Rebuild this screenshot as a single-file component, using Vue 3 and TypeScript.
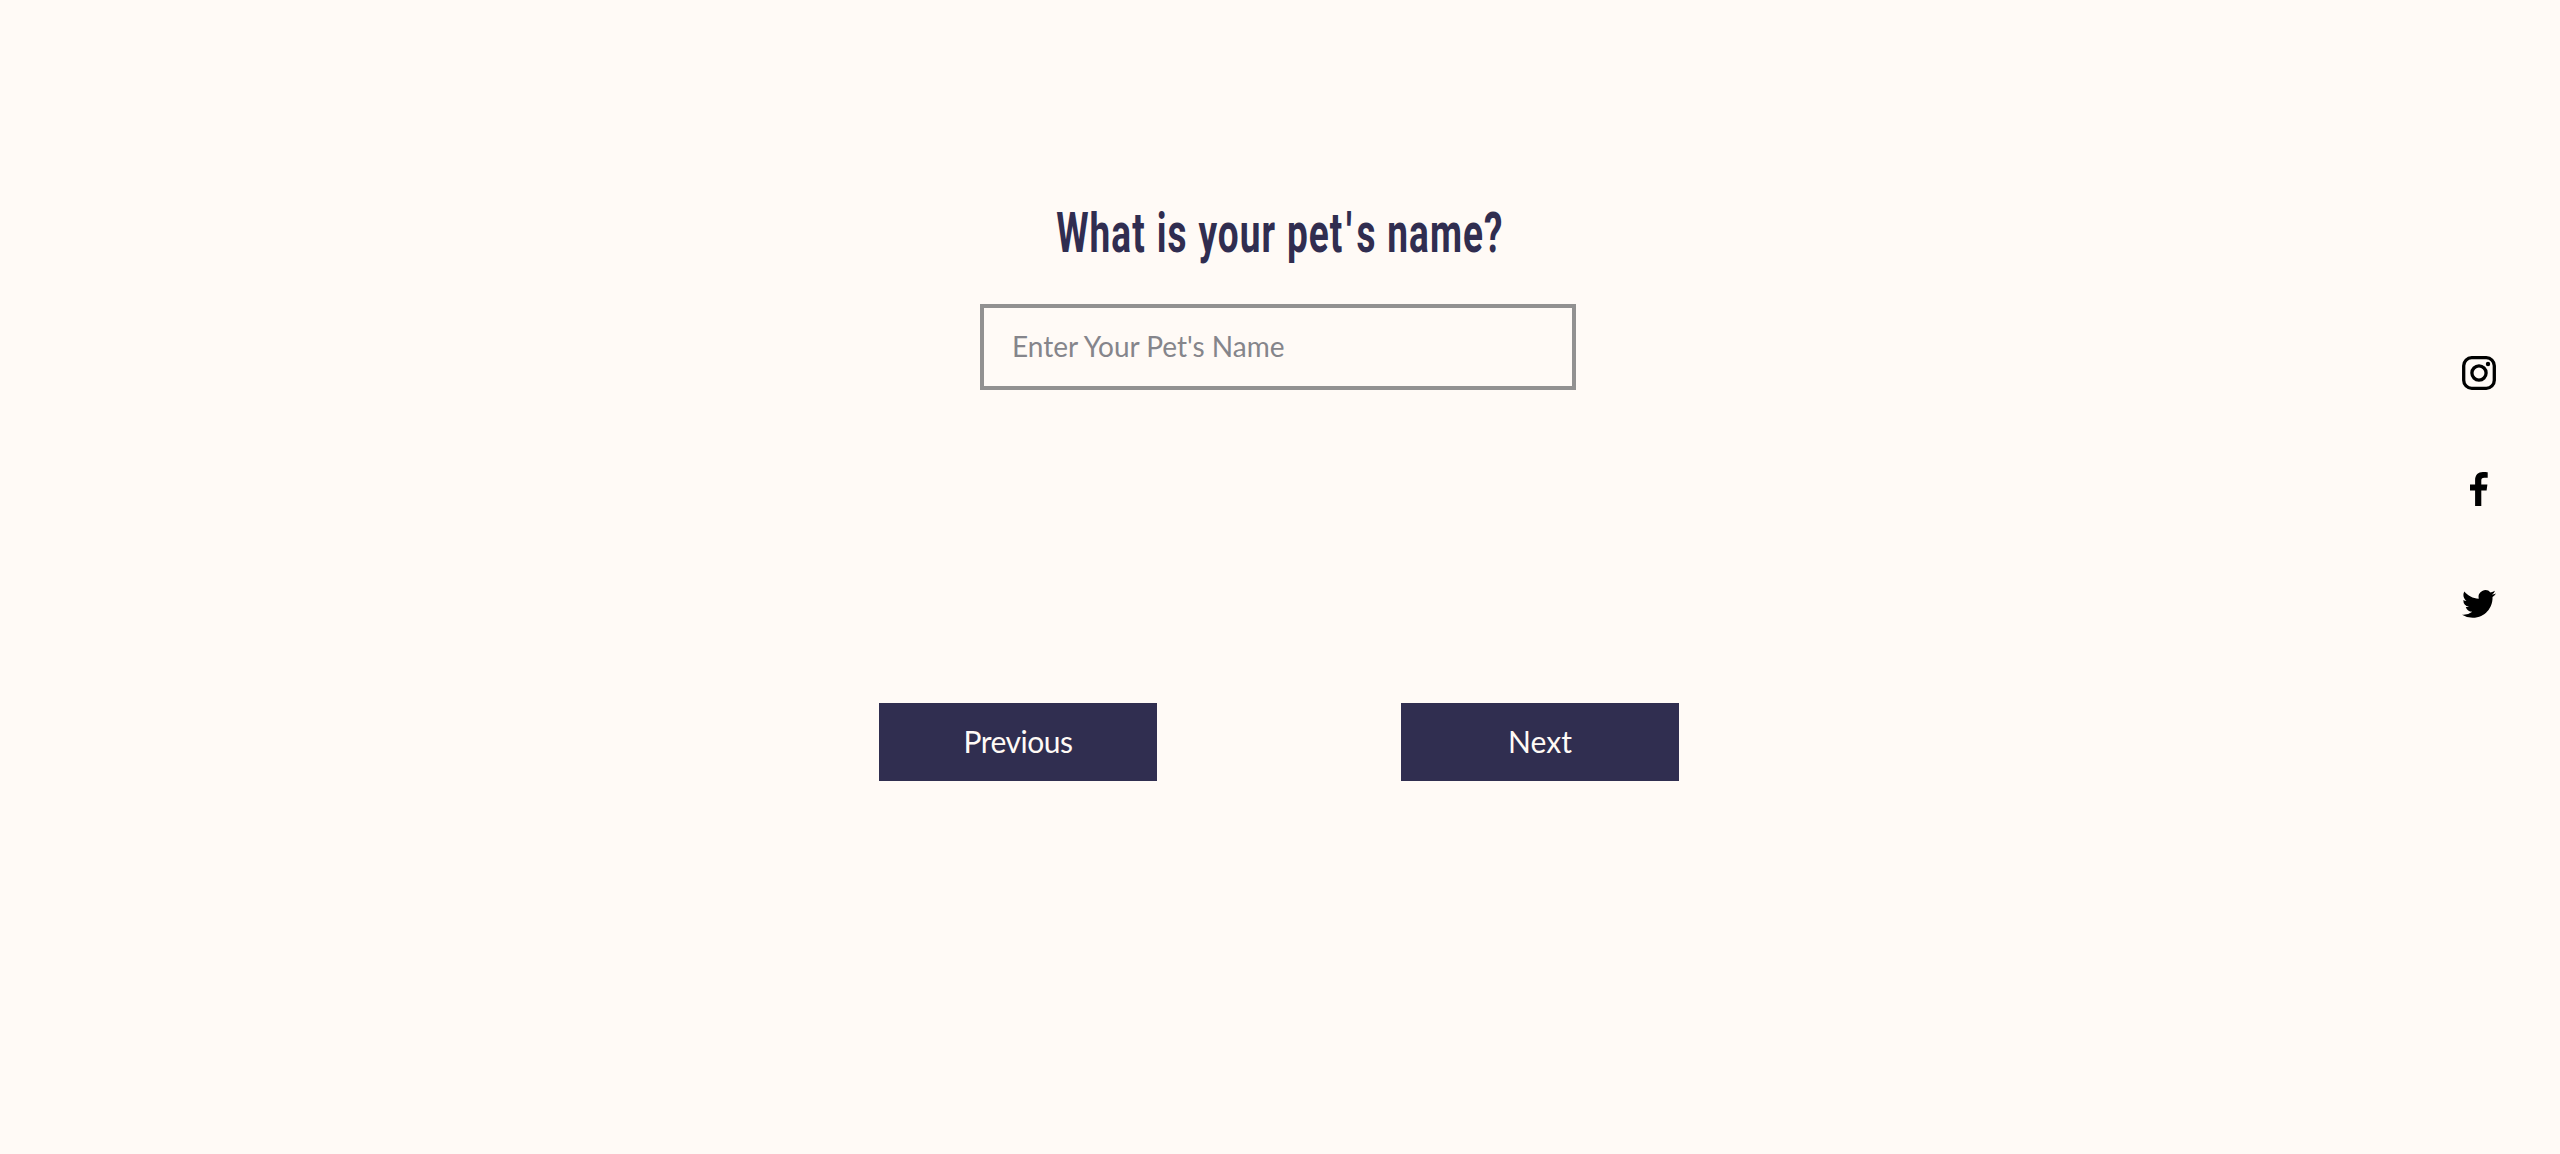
<script setup lang="ts">
import { ref } from 'vue'

const petName = ref('')
</script>

<template>
  <div class="page">
    <main class="form">
      <h1 class="title"><span class="title-text">What is your pet<span class="apostrophe">'</span>s name?</span></h1>
      <input v-model="petName" class="field" type="text" placeholder="Enter Your Pet's Name" />
      <div class="actions">
        <button class="btn btn-prev" type="button">Previous</button>
        <button class="btn" type="button">Next</button>
      </div>
    </main>
    <nav class="social">
      <a class="social-link" aria-label="Instagram">
        <svg viewBox="0 0 34 34" width="34" height="34">
          <rect x="1.7" y="1.7" width="30.6" height="30.6" rx="8" fill="none" stroke="#000" stroke-width="3.3" />
          <circle cx="17" cy="17" r="7.1" fill="none" stroke="#000" stroke-width="3.3" />
          <circle cx="26" cy="8" r="2.2" />
        </svg>
      </a>
      <a class="social-link" aria-label="Facebook">
        <svg viewBox="0 0 34 34" width="34" height="34">
          <path d="M13.1 34V18.6H8V12.5h5.1V8.2C13.1 2.9 16.2 0 20.9 0c2.2 0 4.1.2 4.8.3v5.5h-3.3c-2.6 0-3.1 1.2-3.1 3v3.7h6.1l-.8 6.1h-5.3V34z" />
        </svg>
      </a>
      <a class="social-link" aria-label="Twitter">
        <svg viewBox="0 0 24 24" width="34" height="34">
          <path d="M23.953 4.57a10 10 0 01-2.825.775 4.958 4.958 0 002.163-2.723c-.951.555-2.005.959-3.127 1.184a4.92 4.92 0 00-8.384 4.482C7.69 8.095 4.067 6.13 1.64 3.162a4.822 4.822 0 00-.666 2.475c0 1.71.87 3.213 2.188 4.096a4.904 4.904 0 01-2.228-.616v.06a4.923 4.923 0 003.946 4.827 4.996 4.996 0 01-2.212.085 4.936 4.936 0 004.604 3.417 9.867 9.867 0 01-6.102 2.105c-.39 0-.779-.023-1.17-.067a13.995 13.995 0 007.557 2.209c9.053 0 13.998-7.496 13.998-13.985 0-.21 0-.42-.015-.63A9.935 9.935 0 0024 4.59z" />
        </svg>
      </a>
    </nav>
  </div>
</template>

<style>
body {
  background: #fffaf6;
}
</style>

<style scoped>
.page {
  box-sizing: border-box;
  display: flex;
  justify-content: space-between;
  height: 1154px;
  padding-left: 879px;
  overflow: hidden;
  background: #fffaf6;
  font-family: Lato, sans-serif;
}
.form {
  display: flex;
  flex-direction: column;
  align-items: center;
  width: 800px;
  padding-top: 201px;
}
.title {
  display: flex;
  justify-content: center;
  width: 802px;
  height: 64px;
  margin: 0 0 39px;
  color: #302d50;
  font: 700 56px/64px Roboto, sans-serif;
  white-space: nowrap;
}
.title-text {
  letter-spacing: 1.6px;
  word-spacing: 1px;
  transform: translateX(1px) scaleX(0.66);
}
.apostrophe {
  margin: 0 5px 0 4px;
}
.field {
  box-sizing: border-box;
  width: 596px;
  height: 86px;
  margin: 0 0 0 -2px;
  padding: 0 27px 2px 28px;
  border: 4px solid #929191;
  border-radius: 0;
  outline: none;
  background: transparent;
  color: #302d50;
  font: 400 28px Lato, sans-serif;
}
.field::placeholder {
  color: #85858b;
  opacity: 1;
}
.actions {
  display: flex;
  justify-content: space-between;
  width: 800px;
  margin-top: 313px;
}
.btn {
  width: 278px;
  height: 78px;
  padding: 0 0 2px;
  border: 0;
  background: #302e50;
  color: #fffaf6;
  font: 400 30px Lato, sans-serif;
}
.btn-prev {
  letter-spacing: -0.5px;
}
.social {
  display: flex;
  flex-direction: column;
  gap: 81.5px;
  padding: 356px 64px 0 0;
}
.social-link,
.social-link svg {
  display: block;
}
</style>
